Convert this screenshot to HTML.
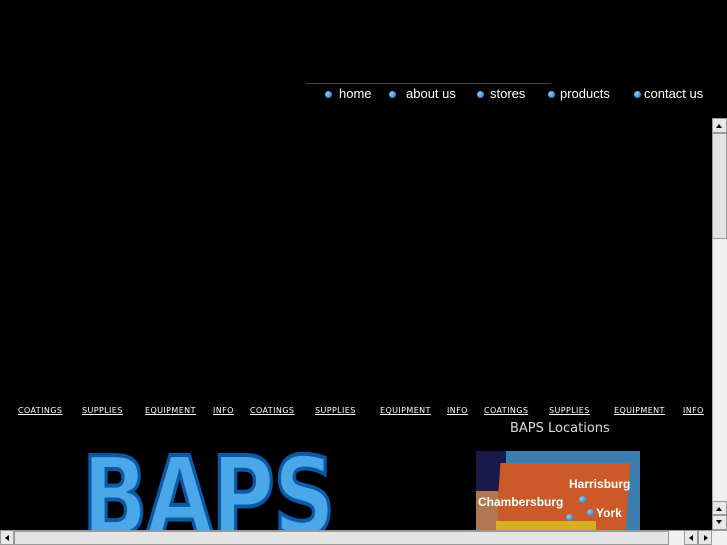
<!DOCTYPE html>
<html><head><style>
html,body{margin:0;width:727px;height:545px;overflow:hidden}
body{background:#000;position:relative;font-family:"Liberation Sans",sans-serif}
.a{position:absolute}
.nav{color:#fff;font-size:13px;top:86px}
.dot{width:7px;height:7px;border-radius:50%;background:radial-gradient(circle at 35% 35%,#8cf,#1a6fc0);top:91px}
.sub{top:406px;font-family:"DejaVu Sans",sans-serif;font-size:8px;color:#fff;text-decoration:underline;letter-spacing:.4px}
.sb{background:#e8e8e8;border:1px solid #999;box-sizing:border-box}
.ar{width:0;height:0;border:3px solid transparent}
</style></head><body>
<div class="a" style="left:306px;top:83px;width:245px;height:1px;background:#444"></div>
<div class="a dot" style="left:325px"></div><div class="a nav" style="left:339px">home</div>
<div class="a dot" style="left:389px"></div><div class="a nav" style="left:406px">about us</div>
<div class="a dot" style="left:477px"></div><div class="a nav" style="left:490px">stores</div>
<div class="a dot" style="left:548px"></div><div class="a nav" style="left:560px">products</div>
<div class="a dot" style="left:634px"></div><div class="a nav" style="left:644px">contact us</div>

<div class="a sub" style="left:18px">COATINGS</div>
<div class="a sub" style="left:82px">SUPPLIES</div>
<div class="a sub" style="left:145px">EQUIPMENT</div>
<div class="a sub" style="left:213px">INFO</div>
<div class="a sub" style="left:250px">COATINGS</div>
<div class="a sub" style="left:315px">SUPPLIES</div>
<div class="a sub" style="left:380px">EQUIPMENT</div>
<div class="a sub" style="left:447px">INFO</div>
<div class="a sub" style="left:484px">COATINGS</div>
<div class="a sub" style="left:549px">SUPPLIES</div>
<div class="a sub" style="left:614px">EQUIPMENT</div>
<div class="a sub" style="left:683px">INFO</div>

<div class="a" style="left:510px;top:421px;color:#ddd;font-family:'DejaVu Sans',sans-serif;font-size:13px">BAPS Locations</div>

<div class="a" style="left:82px;top:444px;font-family:'DejaVu Sans',sans-serif;font-weight:bold;font-size:108px;line-height:108px;letter-spacing:-2px;color:#4aa8e8;-webkit-text-stroke:4px #0a5aa8;transform:scaleX(0.8);transform-origin:left;white-space:nowrap">BAPS</div>

<div class="a" style="left:476px;top:451px;width:164px;height:80px;background:#3a7fb0;overflow:hidden">
<div class="a" style="left:0;top:0;width:30px;height:40px;background:#1a1a4a"></div>
<div class="a" style="left:22px;top:12px;width:130px;height:70px;background:#cc5a28;transform:skewX(-4deg)"></div>
<div class="a" style="left:0;top:40px;width:22px;height:40px;background:#b07850"></div>
<div class="a" style="left:20px;top:70px;width:100px;height:12px;background:#d4b020"></div>
<div class="a" style="left:93px;top:26px;color:#fff;font-weight:bold;font-size:12px">Harrisburg</div>
<div class="a" style="left:2px;top:44px;color:#fff;font-weight:bold;font-size:12px">Chambersburg</div>
<div class="a" style="left:120px;top:55px;color:#fff;font-weight:bold;font-size:12px">York</div>
<div class="a dot" style="left:103px;top:45px"></div>
<div class="a dot" style="left:111px;top:58px"></div>
<div class="a dot" style="left:90px;top:63px"></div>
</div>

<div class="a" style="left:712px;top:118px;width:15px;height:412px;background:#f0f0f0;border-left:1px solid #aaa;box-sizing:border-box"></div>
<div class="a sb" style="left:712px;top:118px;width:15px;height:15px"><div class="a ar" style="left:3px;top:2px;border-bottom:4px solid #000"></div></div>
<div class="a sb" style="left:712px;top:133px;width:15px;height:106px;background:#e4e4e4"></div>
<div class="a sb" style="left:712px;top:501px;width:15px;height:14px"><div class="a ar" style="left:3px;top:2px;border-bottom:4px solid #000"></div></div>
<div class="a sb" style="left:712px;top:515px;width:15px;height:15px"><div class="a ar" style="left:3px;top:4px;border-top:4px solid #000"></div></div>
<div class="a" style="left:0;top:530px;width:727px;height:15px;background:#f0f0f0;border-top:1px solid #999;box-sizing:border-box"></div>
<div class="a sb" style="left:0;top:530px;width:14px;height:15px"><div class="a ar" style="left:1px;top:4px;border-right:4px solid #000"></div></div>
<div class="a sb" style="left:14px;top:531px;width:655px;height:14px;background:#e4e4e4"></div>
<div class="a sb" style="left:684px;top:530px;width:14px;height:15px"><div class="a ar" style="left:1px;top:4px;border-right:4px solid #000"></div></div>
<div class="a sb" style="left:698px;top:530px;width:14px;height:15px"><div class="a ar" style="left:5px;top:4px;border-left:4px solid #000"></div></div>
</body></html>
